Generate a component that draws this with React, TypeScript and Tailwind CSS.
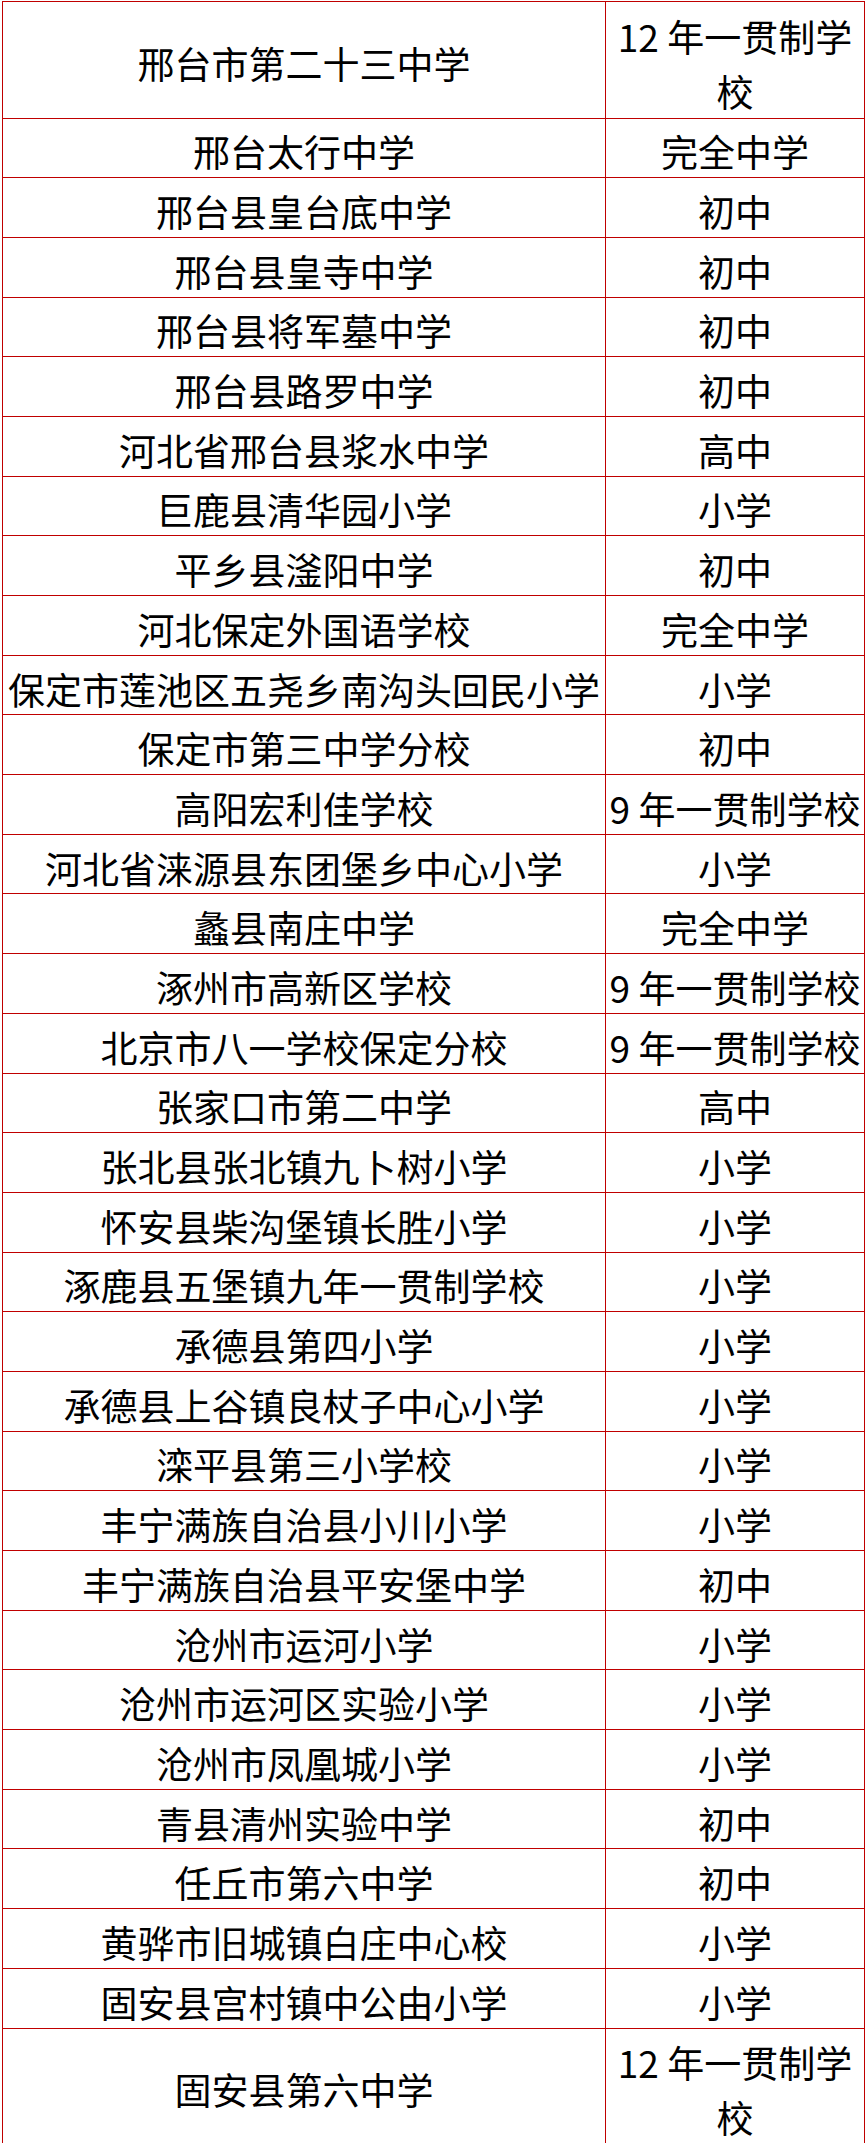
import React from "react";

type Row = { name: string; type: string; tall?: boolean };

const rows: Row[] = [
  { name: "邢台市第二十三中学", type: "12 年一贯制学|校", tall: true },
  { name: "邢台太行中学", type: "完全中学" },
  { name: "邢台县皇台底中学", type: "初中" },
  { name: "邢台县皇寺中学", type: "初中" },
  { name: "邢台县将军墓中学", type: "初中" },
  { name: "邢台县路罗中学", type: "初中" },
  { name: "河北省邢台县浆水中学", type: "高中" },
  { name: "巨鹿县清华园小学", type: "小学" },
  { name: "平乡县滏阳中学", type: "初中" },
  { name: "河北保定外国语学校", type: "完全中学" },
  { name: "保定市莲池区五尧乡南沟头回民小学", type: "小学" },
  { name: "保定市第三中学分校", type: "初中" },
  { name: "高阳宏利佳学校", type: "9 年一贯制学校" },
  { name: "河北省涞源县东团堡乡中心小学", type: "小学" },
  { name: "蠡县南庄中学", type: "完全中学" },
  { name: "涿州市高新区学校", type: "9 年一贯制学校" },
  { name: "北京市八一学校保定分校", type: "9 年一贯制学校" },
  { name: "张家口市第二中学", type: "高中" },
  { name: "张北县张北镇九卜树小学", type: "小学" },
  { name: "怀安县柴沟堡镇长胜小学", type: "小学" },
  { name: "涿鹿县五堡镇九年一贯制学校", type: "小学" },
  { name: "承德县第四小学", type: "小学" },
  { name: "承德县上谷镇良杖子中心小学", type: "小学" },
  { name: "滦平县第三小学校", type: "小学" },
  { name: "丰宁满族自治县小川小学", type: "小学" },
  { name: "丰宁满族自治县平安堡中学", type: "初中" },
  { name: "沧州市运河小学", type: "小学" },
  { name: "沧州市运河区实验小学", type: "小学" },
  { name: "沧州市凤凰城小学", type: "小学" },
  { name: "青县清州实验中学", type: "初中" },
  { name: "任丘市第六中学", type: "初中" },
  { name: "黄骅市旧城镇白庄中心校", type: "小学" },
  { name: "固安县宫村镇中公由小学", type: "小学" },
  { name: "固安县第六中学", type: "12 年一贯制学|校", tall: true },
];

export default function App() {
  return (
    <div className="bg-white min-h-screen pt-[1px] pl-[2px] font-['Noto_Sans_CJK_SC',sans-serif] text-black">
      <div className="w-[863px] border border-[#c00000]">
        {rows.map((row, i) => (
          <div
            key={i}
            className={`flex ${row.tall ? "h-[115.5px]" : "h-[59.7px]"} ${i > 0 ? "border-t border-[#c00000]" : ""}`}
          >
            <div className="w-[603px] shrink-0 border-r border-[#c00000] flex items-center justify-center pt-[8px] text-[37px] leading-none whitespace-nowrap">
              {row.name}
            </div>
            <div className="flex-1 flex flex-col items-center justify-center pt-[8px] text-[37px] leading-[55px] whitespace-nowrap">
              {row.type.split("|").map((line, j) => (
                <span key={j}>{line}</span>
              ))}
            </div>
          </div>
        ))}
      </div>
    </div>
  );
}
